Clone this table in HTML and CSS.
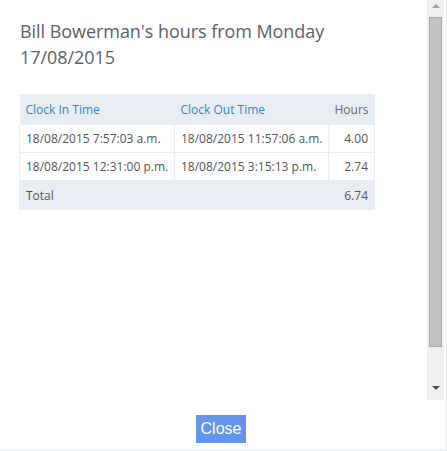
FILE: index.html
```html
<!DOCTYPE html>
<html>
<head>
<meta charset="utf-8">
<link rel="stylesheet" href="styles.css">
</head>
<body>
<div class="frame">
  <div class="viewport">
    <div class="content">
      <h1 class="title">Bill Bowerman's hours from Monday 17/08/2015</h1>
      <table class="hours">
        <colgroup>
          <col class="col-in">
          <col class="col-out">
          <col class="col-hrs">
        </colgroup>
        <thead>
          <tr>
            <th>Clock In Time</th>
            <th>Clock Out Time</th>
            <th class="plain num">Hours</th>
          </tr>
        </thead>
        <tbody>
          <tr>
            <td>18/08/2015 7:57:03 a.m.</td>
            <td>18/08/2015 11:57:06 a.m.</td>
            <td class="num">4.00</td>
          </tr>
          <tr>
            <td>18/08/2015 12:31:00 p.m.</td>
            <td>18/08/2015 3:15:13 p.m.</td>
            <td class="num">2.74</td>
          </tr>
        </tbody>
        <tfoot>
          <tr>
            <td colspan="2">Total</td>
            <td class="num">6.74</td>
          </tr>
        </tfoot>
      </table>
    </div>
    <div class="scrollbar">
      <div class="sb-btn"><span class="arrow-up"></span></div>
      <div class="sb-thumb"></div>
      <div class="sb-rest"></div>
      <div class="sb-btn"><span class="arrow-down"></span></div>
    </div>
  </div>
  <div class="footer">
    <button class="close">Close</button>
  </div>
</div>
</body>
</html>
```

FILE: styles.css
```css
html, body {
  margin: 0;
  padding: 0;
  background: #fff;
}
.frame {
  width: 446px;
  height: 450px;
  border-right: 1px solid #e3e8ef;
  border-bottom: 1px solid #e3e8ef;
  display: flex;
  flex-direction: column;
  font-family: "Open Sans", "Noto Sans", sans-serif;
}
.viewport {
  height: 400px;
  display: flex;
}
.content {
  flex: 1;
  padding: 18px 0 0 19px;
}
.title {
  margin: 0 0 24px 1px;
  font-size: 18px;
  font-weight: normal;
  line-height: 26px;
  color: #5b5f66;
  width: 330px;
  letter-spacing: -0.05px;
}
.hours {
  border-collapse: collapse;
  table-layout: fixed;
  width: 355px;
  font-size: 12px;
  color: #555;
}
.col-in { width: 155px; }
.col-out { width: 154px; }
.col-hrs { width: 46px; }
.hours th {
  background: #e8edf4;
  font-weight: normal;
  text-align: left;
  color: #2f87c2;
  height: 30px;
  padding: 0 6px;
}
.hours th.plain { color: #666; }
.hours td {
  height: 27px;
  padding: 0 6px;
  border: 1px solid #e8edf4;
  white-space: nowrap;
  overflow: hidden;
}
.hours tfoot td {
  background: #e8edf4;
  height: 28px;
}
.hours .num {
  text-align: right;
}
.scrollbar {
  width: 17px;
  margin-right: 2px;
  background: #f0f0f0;
  display: flex;
  flex-direction: column;
}
.sb-btn {
  height: 17px;
  display: flex;
  align-items: center;
  justify-content: center;
}
.sb-thumb {
  height: 328px;
  margin: 0 2px;
  background: #c1c1c1;
  border: 1px solid #a9a9a9;
}
.sb-rest {
  flex: 1;
}
.arrow-up {
  width: 0;
  height: 0;
  border-left: 4px solid transparent;
  border-right: 4px solid transparent;
  border-bottom: 4px solid #a3a3a3;
  margin-top: -6px;
}
.arrow-down {
  width: 0;
  height: 0;
  border-left: 4px solid transparent;
  border-right: 4px solid transparent;
  border-top: 4px solid #505050;
  margin-top: -7px;
}
.footer {
  flex: 1;
  display: flex;
  justify-content: center;
  align-items: flex-start;
  padding: 15px 4px 0 0;
}
.close {
  width: 50px;
  height: 28px;
  border: none;
  background: #6495ed;
  color: #fff;
  font-family: "Liberation Sans", Arial, sans-serif;
  font-size: 16px;
  padding: 0;
}
```
